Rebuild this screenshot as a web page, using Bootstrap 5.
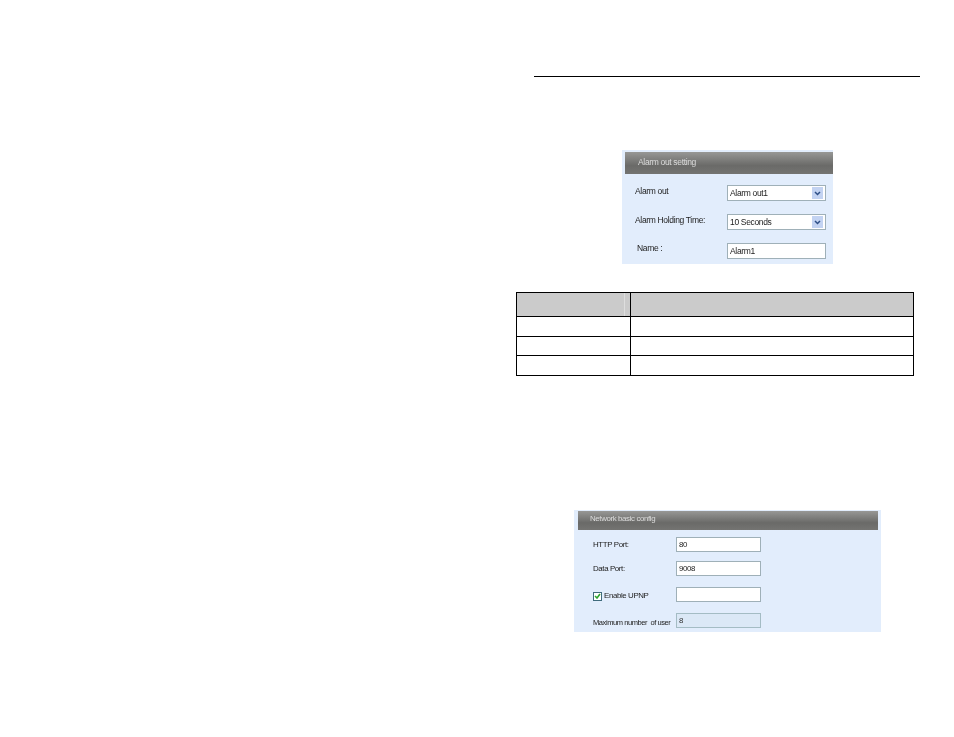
<!DOCTYPE html>
<html lang="en">
<head>
<meta charset="utf-8">
<title>Alarm out and network settings</title>
<link rel="stylesheet" href="https://cdn.jsdelivr.net/npm/bootstrap@5.3.0/dist/css/bootstrap.min.css">
<style>
html, body { background: #fff; margin: 0; height: 737px; overflow: hidden; }
.doc-col { margin-left: 516px; width: 404px; padding-top: 76px; font-family: "Liberation Sans", Arial, sans-serif; }
.doc-rule { height: 1px; background: #000; margin-left: 18px; }
.shot { background: #e2edfc; color: #222; line-height: 10px; filter: blur(.3px); }
.shot-one { font-size: 8.5px; letter-spacing: -.34px; width: 211px; height: 114px; margin: 73px 0 0 106px; padding: 2px 0 0 3px; }
.shot-two { font-size: 7.9px; letter-spacing: -.38px; width: 307px; height: 122px; margin: 134px 0 0 58px; padding: 1px 3px 0 4px; }
.shot-head { background: linear-gradient(#979795, #6a6a68 62%, #747472); color: #dcdcdc; display: flex; align-items: center; }
.shot-one .shot-head { height: 22px; padding: 0 0 2px 13px; }
.shot-two .shot-head { height: 19px; padding: 0 0 3px 12px; }
.shot-line { display: flex; align-items: center; }
.shot-one .shot-line { height: 16px; margin-top: 11px; padding-left: 10px; }
.shot-one .shot-line:nth-child(3), .shot-one .shot-line:nth-child(4) { margin-top: 13px; }
.shot-one .shot-label { width: 92px; padding-bottom: 5px; }
.shot-one .name-label { padding-left: 2px; padding-bottom: 6px; }
.shot-two .shot-line { height: 15px; padding-left: 15px; margin-top: 9px; }
.shot-two .shot-line:nth-child(2) { margin-top: 7px; }
.shot-two .shot-line:nth-child(4), .shot-two .shot-line:nth-child(5) { margin-top: 11px; }
.shot-two .shot-label { width: 83px; white-space: nowrap; padding-top: 1px; }
.shot-two .shot-line:nth-child(4) .shot-label { padding-top: 3px; }
.shot-two .shot-line:nth-child(5) .shot-label { padding-top: 4px; font-size: 7.5px; letter-spacing: -.42px; }
.fake-field { border: 1px solid #9fb0b8; border-radius: 0; background: #fff; color: #222; line-height: 10px; box-shadow: none; min-height: 0; letter-spacing: inherit; }
.shot-one .fake-field { font-size: 8.5px; width: 99px; height: 16px; padding: 0 2px; }
.shot-two .fake-field { font-size: 7.9px; width: 85px; height: 15.5px; padding: 0 2px; }
.fake-field:disabled { background: #dbe8f6; border-color: #a4bcc4; opacity: 1; color: #333; }
.fake-select { display: flex; align-items: center; justify-content: space-between; padding-right: 1px; }
.drop-btn { width: 11px; height: 12px; background: #c3d3f2; display: flex; align-items: center; justify-content: center; }
.fake-check { width: 9px; height: 9px; border: 1px solid #3f6b7c; background: #fff; margin-right: 2px; display: flex; align-items: center; justify-content: center; flex: none; }
.spec-table { width: 398px; height: 83px; table-layout: fixed; margin: 28px 0 0; border-collapse: collapse; --bs-table-bg: transparent; }
.spec-table th, .spec-table td { border: 1px solid #000; padding: 0; }
.spec-table tr:first-child { height: 24px; }
.spec-table tr:nth-child(2) { height: 20px; }
.spec-table tr:nth-child(3) { height: 19px; }
.spec-table tr:nth-child(4) { height: 20px; }
.spec-table th { background: #cbcbcb; }
.spec-table .col-a { width: 114px; box-shadow: inset -5px 0 0 #cbcbcb, inset -6px 0 0 #dedede; }
</style>
</head>
<body>
<main class="doc-col">
  <div class="doc-rule"></div>

  <section class="shot shot-one">
    <div class="shot-head">Alarm out setting</div>
    <div class="shot-line">
      <span class="shot-label">Alarm out</span>
      <div class="fake-field fake-select"><span>Alarm out1</span>
        <span class="drop-btn"><svg width="7" height="5" viewBox="0 0 7 5"><path d="M1 1l2.5 2.5L6 1" fill="none" stroke="#2f4f86" stroke-width="1.5"/></svg></span>
      </div>
    </div>
    <div class="shot-line">
      <span class="shot-label">Alarm Holding Time:</span>
      <div class="fake-field fake-select"><span>10 Seconds</span>
        <span class="drop-btn"><svg width="7" height="5" viewBox="0 0 7 5"><path d="M1 1l2.5 2.5L6 1" fill="none" stroke="#2f4f86" stroke-width="1.5"/></svg></span>
      </div>
    </div>
    <div class="shot-line">
      <span class="shot-label name-label">Name :</span>
      <input class="form-control fake-field" type="text" value="Alarm1" aria-label="Name">
    </div>
  </section>

  <table class="table spec-table">
    <tbody>
      <tr><th class="col-a"></th><th></th></tr>
      <tr><td></td><td></td></tr>
      <tr><td></td><td></td></tr>
      <tr><td></td><td></td></tr>
    </tbody>
  </table>

  <section class="shot shot-two">
    <div class="shot-head">Network basic config</div>
    <div class="shot-line">
      <span class="shot-label">HTTP Port:</span>
      <input class="form-control fake-field" type="text" value="80" aria-label="HTTP Port">
    </div>
    <div class="shot-line">
      <span class="shot-label">Data Port:</span>
      <input class="form-control fake-field" type="text" value="9008" aria-label="Data Port">
    </div>
    <div class="shot-line">
      <span class="shot-label d-flex align-items-center">
        <span class="fake-check"><svg width="7" height="6" viewBox="0 0 7 6"><path d="M1 3l2 2 3-4" fill="none" stroke="#2ea52e" stroke-width="1.6"/></svg></span>Enable UPNP
      </span>
      <input class="form-control fake-field" type="text" aria-label="Enable UPNP">
    </div>
    <div class="shot-line">
      <span class="shot-label">Maximum number&nbsp; of user</span>
      <input class="form-control fake-field" type="text" value="8" disabled aria-label="Maximum number of user">
    </div>
  </section>
</main>
<script src="https://cdn.jsdelivr.net/npm/bootstrap@5.3.0/dist/js/bootstrap.bundle.min.js"></script>
</body>
</html>
